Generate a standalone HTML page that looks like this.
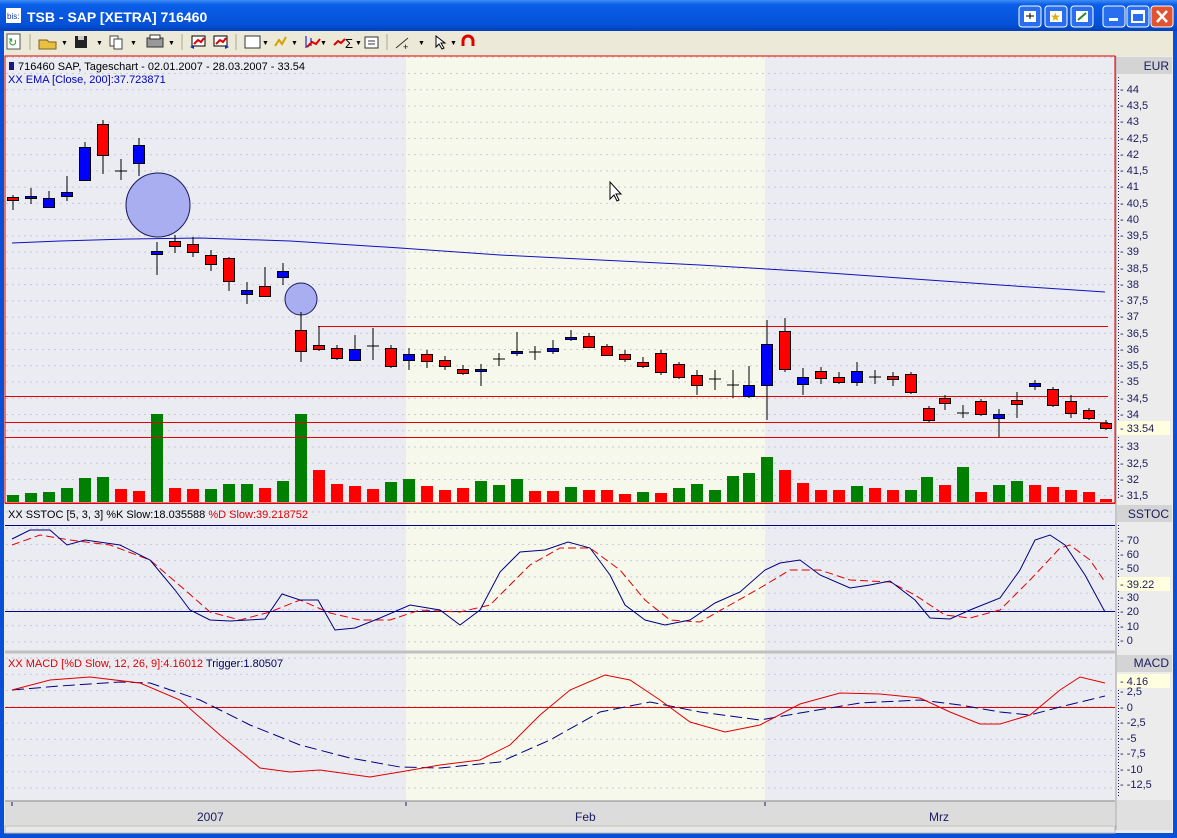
<!DOCTYPE html>
<html><head><meta charset="utf-8"><style>
body{margin:0;width:1177px;height:838px;overflow:hidden;background:#ece9d8;font-family:"Liberation Sans",sans-serif}
svg{position:absolute;left:0;top:0}
</style></head><body>
<svg width="1177" height="838" viewBox="0 0 1177 838" font-family="Liberation Sans, sans-serif">
<defs>
<linearGradient id="tb" x1="0" y1="0" x2="0" y2="1"><stop offset="0" stop-color="#3d8cf5"/><stop offset=".15" stop-color="#0a5ee8"/><stop offset=".8" stop-color="#0551d8"/><stop offset="1" stop-color="#0240b8"/></linearGradient>
<pattern id="dots" width="6" height="16.24" patternUnits="userSpaceOnUse" y="8"><rect x="0" y="0" width="2" height="1" fill="#c8c8d4"/></pattern>
</defs>
<!-- window frame -->
<rect x="0" y="0" width="1177" height="838" fill="#0850d8"/>
<rect x="0" y="0" width="1177" height="31" fill="url(#tb)"/>
<rect x="4" y="31" width="1169" height="802" fill="#ece9d8"/>
<!-- title -->
<rect x="6" y="8" width="15" height="15" fill="#fff"/><text x="7" y="19" font-size="8" fill="#0a3a9a">bis:</text>
<text x="27" y="22" font-size="14" font-weight="bold" fill="#fff">TSB - SAP [XETRA] 716460</text>
<g stroke="#fff" stroke-width="1">
<rect x="1019" y="6" width="22" height="21" rx="3" fill="#2a6ef0"/>
<rect x="1045" y="6" width="22" height="21" rx="3" fill="#2a6ef0"/>
<rect x="1071" y="6" width="22" height="21" rx="3" fill="#2a6ef0"/>
<rect x="1103" y="6" width="22" height="21" rx="3" fill="#2a6ef0"/>
<rect x="1127" y="6" width="22" height="21" rx="3" fill="#2a6ef0"/>
<rect x="1151" y="6" width="22" height="21" rx="3" fill="#e0552f"/>
</g>
<rect x="1024" y="11" width="12" height="11" fill="#fff"/><path d="M1026 16h8M1030 13v6" stroke="#000"/>
<rect x="1050" y="11" width="12" height="11" fill="#fff"/><text x="1050" y="21" font-size="12" fill="#e0b000">★</text>
<rect x="1076" y="11" width="12" height="11" fill="#fff"/><path d="M1078 20l8-7" stroke="#2a8a2a" stroke-width="2"/>
<rect x="1109" y="18" width="9" height="3" fill="#fff"/>
<rect x="1132" y="11" width="12" height="11" fill="none" stroke="#fff" stroke-width="2"/><rect x="1132" y="11" width="12" height="3" fill="#fff"/>
<path d="M1157 11l10 11M1167 11l-10 11" stroke="#fff" stroke-width="2.5"/>
<!-- toolbar icons -->
<g font-size="13">
<rect x="7" y="34" width="13" height="15" fill="#fff" stroke="#555"/><text x="8" y="46" fill="#1a9a1a" font-size="11">↻</text>
<line x1="30" y1="34" x2="30" y2="50" stroke="#aca899"/>
<path d="M39 40h8l2 2h7v7h-17z" fill="#e8c040" stroke="#806020"/><text x="61" y="45" font-size="7">▼</text>
<rect x="75" y="36" width="12" height="12" fill="#222"/><rect x="78" y="36" width="6" height="4" fill="#ccc"/><text x="96" y="45" font-size="7">▼</text>
<rect x="110" y="36" width="8" height="10" fill="#fff" stroke="#444"/><rect x="114" y="39" width="8" height="10" fill="#fff" stroke="#444"/><text x="130" y="45" font-size="7">▼</text>
<rect x="147" y="38" width="16" height="9" fill="#999" stroke="#333"/><rect x="150" y="35" width="10" height="4" fill="#fff" stroke="#333"/><text x="168" y="45" font-size="7">▼</text>
<line x1="182" y1="34" x2="182" y2="50" stroke="#aca899"/>
<rect x="192" y="36" width="13" height="10" fill="#fff" stroke="#000"/><path d="M194 44l4-4 3 2 3-4" stroke="#d00" fill="none" stroke-width="2"/><path d="M190 47l4-2v4z" fill="#0030c0"/>
<rect x="214" y="36" width="13" height="10" fill="#fff" stroke="#000"/><path d="M216 44l4-4 3 2 3-4" stroke="#d00" fill="none" stroke-width="2"/><path d="M229 47l-4-2v4z" fill="#0030c0"/>
<line x1="236" y1="34" x2="236" y2="50" stroke="#aca899"/>
<rect x="245" y="36" width="15" height="12" fill="#fff" stroke="#333"/><text x="262" y="45" font-size="7">▼</text>
<path d="M275 46l4-6 3 4 4-7" stroke="#d4a000" fill="none" stroke-width="2"/><text x="291" y="45" font-size="7">▼</text>
<path d="M306 36v12M311 38v8" stroke="#00c"/><path d="M307 47l5-5 4 2 4-5" stroke="#d00" fill="none" stroke-width="2"/><text x="320" y="45" font-size="7">▼</text>
<path d="M334 45l4-4 3 2 4-4" stroke="#d00" fill="none" stroke-width="2"/><text x="345" y="48" font-size="13">Σ</text><text x="355" y="45" font-size="7">▼</text>
<rect x="365" y="37" width="13" height="11" fill="#fff" stroke="#333"/><path d="M368 41h7M368 44h7" stroke="#333"/>
<line x1="387" y1="34" x2="387" y2="50" stroke="#aca899"/>
<path d="M396 48l12-10" stroke="#333"/><text x="403" y="50" font-size="9">+</text><text x="418" y="45" font-size="7">▼</text>
<path d="M436 36v11l3-3 3 5 2-1-3-5h4z" fill="#fff" stroke="#000"/><text x="450" y="45" font-size="7">▼</text>
<path d="M463 46v-5a5 5 0 0 1 10 0v5" stroke="#d00" stroke-width="3" fill="none"/>
</g>
<!-- chart area -->
<rect x="5" y="56" width="1110" height="745" fill="#ebebf2"/>
<rect x="406" y="56" width="359" height="745" fill="#f7f8ec"/>
<rect x="5" y="56" width="1110" height="745" fill="url(#dots)"/>
<rect x="5" y="56" width="1110" height="447" fill="none" stroke="#e00000" stroke-width="1"/>
<line x1="5" y1="503.5" x2="1115" y2="503.5" stroke="#e00000"/>
<line x1="5" y1="652" x2="1115" y2="652" stroke="#c0c0c0" stroke-width="3"/>
<!-- right axis -->
<rect x="1116" y="56" width="57" height="777" fill="#ececec"/>
<line x1="1116" y1="56" x2="1116" y2="830" stroke="#a0a0a0"/>
<rect x="1117" y="57" width="55" height="17" fill="#d4d4d4"/><text x="1169" y="70" font-size="12" text-anchor="end" fill="#1a1a60">EUR</text>
<rect x="1117" y="505" width="55" height="17" fill="#d4d4d4"/><text x="1169" y="518" font-size="12" text-anchor="end" fill="#1a1a60">SSTOC</text>
<rect x="1117" y="655" width="55" height="17" fill="#d4d4d4"/><text x="1169" y="667" font-size="12" text-anchor="end" fill="#1a1a60">MACD</text>
<rect x="1117" y="800" width="55" height="30" fill="#e0e0e0"/>
<g stroke="#1a1a60" stroke-dasharray="1,2"><line x1="1118.5" y1="77" x2="1118.5" y2="500"/><line x1="1118.5" y1="525" x2="1118.5" y2="648"/><line x1="1118.5" y1="675" x2="1118.5" y2="798"/></g>
<g font-size="11" fill="#1a1a60">
<text x="1120" y="93">- 44</text><text x="1120" y="109">- 43,5</text><text x="1120" y="125">- 43</text><text x="1120" y="142">- 42,5</text><text x="1120" y="158">- 42</text><text x="1120" y="174">- 41,5</text><text x="1120" y="190">- 41</text><text x="1120" y="207">- 40,5</text><text x="1120" y="223">- 40</text><text x="1120" y="239">- 39,5</text><text x="1120" y="255">- 39</text><text x="1120" y="272">- 38,5</text><text x="1120" y="288">- 38</text><text x="1120" y="304">- 37,5</text><text x="1120" y="320">- 37</text><text x="1120" y="337">- 36,5</text><text x="1120" y="353">- 36</text><text x="1120" y="369">- 35,5</text><text x="1120" y="385">- 35</text><text x="1120" y="402">- 34,5</text><text x="1120" y="418">- 34</text><text x="1120" y="450">- 33</text><text x="1120" y="467">- 32,5</text><text x="1120" y="483">- 32</text><text x="1120" y="499">- 31,5</text>
<rect x="1117" y="421" width="53" height="14" fill="#ffffe0"/><text x="1120" y="432">- 33.54</text>
<text x="1120" y="544">- 70</text><text x="1120" y="558">- 60</text><text x="1120" y="572">- 50</text><rect x="1117" y="577" width="53" height="14" fill="#ffffe0"/><text x="1120" y="588">- 39.22</text><text x="1120" y="601">- 30</text><text x="1120" y="615">- 20</text><text x="1120" y="630">- 10</text><text x="1120" y="644">- 0</text>
<rect x="1117" y="674" width="53" height="14" fill="#ffffe0"/><text x="1120" y="685">- 4.16</text><text x="1120" y="695">- 2,5</text><text x="1120" y="711">- 0</text><text x="1120" y="726">- -2,5</text><text x="1120" y="742">- -5</text><text x="1120" y="757">- -7,5</text><text x="1120" y="773">- -10</text><text x="1120" y="788">- -12,5</text>
</g>
<!-- date axis -->
<rect x="5" y="801" width="1110" height="24" fill="#dcdcdc"/>
<line x1="5" y1="801" x2="1115" y2="801" stroke="#888"/>
<path d="M12 802v4M406 802v4M765 802v4" stroke="#1a1a60"/>
<g font-size="12" fill="#1a1a60"><text x="197" y="821">2007</text><text x="575" y="821">Feb</text><text x="929" y="821">Mrz</text></g>
<rect x="5" y="826" width="1110" height="7" fill="#e8e8e8" stroke="#bbb"/>
<!-- headers -->
<rect x="9" y="62" width="5" height="8" fill="#1a1a80"/>
<text x="18" y="70" font-size="11" fill="#000">716460  SAP, Tageschart - 02.01.2007 - 28.03.2007 - 33.54</text>
<text x="8" y="83" font-size="11" fill="#0000c0">XX EMA [Close, 200]:37.723871</text>
<text x="8" y="518" font-size="11" fill="#000">XX SSTOC [5, 3, 3] %K Slow:18.035588 <tspan fill="#e00000">%D Slow:39.218752</tspan></text>
<text x="8" y="667" font-size="11" fill="#e00000">XX MACD [%D Slow, 12, 26, 9]:4.16012 <tspan fill="#000060">Trigger:1.80507</tspan></text>
<!-- volumes -->
<g fill="#008000">
<rect x="7" y="495" width="12" height="7"/><rect x="25" y="493" width="12" height="9"/><rect x="43" y="492" width="12" height="10"/><rect x="61" y="488" width="12" height="14"/><rect x="79" y="478" width="12" height="24"/><rect x="97" y="477" width="12" height="25"/><rect x="151" y="414" width="12" height="88"/><rect x="205" y="489" width="12" height="13"/><rect x="223" y="484" width="12" height="18"/><rect x="241" y="484" width="12" height="18"/><rect x="277" y="481" width="12" height="21"/><rect x="295" y="414" width="12" height="88"/><rect x="385" y="482" width="12" height="20"/><rect x="403" y="479" width="12" height="23"/><rect x="475" y="481" width="12" height="21"/><rect x="493" y="485" width="12" height="17"/><rect x="511" y="479" width="12" height="23"/><rect x="565" y="487" width="12" height="15"/><rect x="637" y="492" width="12" height="10"/><rect x="673" y="488" width="12" height="14"/><rect x="691" y="484" width="12" height="18"/><rect x="709" y="490" width="12" height="12"/><rect x="727" y="476" width="12" height="26"/><rect x="743" y="473" width="12" height="29"/><rect x="761" y="457" width="12" height="45"/><rect x="851" y="486" width="12" height="16"/><rect x="905" y="490" width="12" height="12"/><rect x="921" y="477" width="12" height="25"/><rect x="957" y="467" width="12" height="35"/><rect x="993" y="485" width="12" height="17"/><rect x="1011" y="481" width="12" height="21"/>
</g>
<g fill="#ff0000">
<rect x="115" y="489" width="12" height="13"/><rect x="133" y="491" width="12" height="11"/><rect x="169" y="488" width="12" height="14"/><rect x="187" y="489" width="12" height="13"/><rect x="259" y="488" width="12" height="14"/><rect x="313" y="470" width="12" height="32"/><rect x="331" y="484" width="12" height="18"/><rect x="349" y="486" width="12" height="16"/><rect x="367" y="489" width="12" height="13"/><rect x="421" y="486" width="12" height="16"/><rect x="439" y="490" width="12" height="12"/><rect x="457" y="488" width="12" height="14"/><rect x="529" y="491" width="12" height="11"/><rect x="547" y="491" width="12" height="11"/><rect x="583" y="490" width="12" height="12"/><rect x="601" y="490" width="12" height="12"/><rect x="619" y="494" width="12" height="8"/><rect x="655" y="493" width="12" height="9"/><rect x="779" y="470" width="12" height="32"/><rect x="797" y="483" width="12" height="19"/><rect x="815" y="490" width="12" height="12"/><rect x="833" y="490" width="12" height="12"/><rect x="869" y="488" width="12" height="14"/><rect x="887" y="490" width="12" height="12"/><rect x="939" y="485" width="12" height="17"/><rect x="975" y="492" width="12" height="10"/><rect x="1029" y="485" width="12" height="17"/><rect x="1047" y="487" width="12" height="15"/><rect x="1065" y="490" width="12" height="12"/><rect x="1083" y="492" width="12" height="10"/><rect x="1100" y="499" width="12" height="3"/>
</g>
<!-- red support lines -->
<g stroke="#e00000"><line x1="318" y1="326.5" x2="1108" y2="326.5"/><line x1="5" y1="396.5" x2="1108" y2="396.5"/><line x1="5" y1="422.5" x2="1108" y2="422.5"/><line x1="5" y1="437.5" x2="1108" y2="437.5"/></g>
<!-- EMA -->
<polyline fill="none" stroke="#1010c0" points="12,243 60,241 130,239 200,238 290,241 400,248 500,255 600,260 700,265 800,271 900,278 1000,285 1105,292"/>
<!-- circles -->
<circle cx="158" cy="205" r="32" fill="#a8aef0" stroke="#1a1a60"/>
<circle cx="301" cy="299" r="16" fill="#a8aef0" stroke="#1a1a60"/>
<!-- candles -->
<g stroke="#000" stroke-width="1">
<path d="M13 195v15M31 188v16M49 191v16M67 176v25M85 142v38M103 120v54M121 159v21M115 171h12M139 138v38M157 242v33M175 235v18M193 237v20M211 250v21M229 257v34M247 282v22M265 267v29M283 263v22M301 312v50M319 326v25M337 345v15M355 335v26M373 328v32M367 346h12M391 345v23M409 348v22M427 350v18M445 356v14M463 365v10M481 364v22M499 353v13M493 359h12M517 332v24M535 346v14M529 352h12M553 340v14M571 330v11M589 333v15M607 344v12M625 350v12M643 357v11M661 350v25M679 362v17M697 370v25M715 370v20M709 379h12M733 370v28M727 385h12M749 366v32M767 320v100M785 318v54M803 368v27M821 367v17M839 372v12M857 362v24M875 370v14M869 377h12M893 372v14M911 372v22M929 406v16M945 395v15M963 405v13M957 413h12M981 399v17M999 409v28M1017 392v26M1035 380v10M1053 387v20M1071 395v23M1089 408v12M1106 420v10"/>
</g>
<g stroke="#000" stroke-width="1" fill="#ff0000">
<rect x="7.5" y="197.5" width="11" height="3"/><rect x="97.5" y="124.5" width="11" height="31"/><rect x="169.5" y="241.5" width="11" height="5"/><rect x="187.5" y="244.5" width="11" height="8"/><rect x="205.5" y="255.5" width="11" height="9"/><rect x="223.5" y="258.5" width="11" height="23"/><rect x="259.5" y="286.5" width="11" height="10"/><rect x="295.5" y="330.5" width="11" height="21"/><rect x="313.5" y="345.5" width="11" height="4"/><rect x="331.5" y="348.5" width="11" height="10"/><rect x="385.5" y="348.5" width="11" height="18"/><rect x="421.5" y="354.5" width="11" height="7"/><rect x="439.5" y="360.5" width="11" height="6"/><rect x="457.5" y="369.5" width="11" height="4"/><rect x="583.5" y="336.5" width="11" height="11"/><rect x="601.5" y="346.5" width="11" height="9"/><rect x="619.5" y="354.5" width="11" height="5"/><rect x="637.5" y="362.5" width="11" height="4"/><rect x="655.5" y="353.5" width="11" height="19"/><rect x="673.5" y="364.5" width="11" height="13"/><rect x="691.5" y="375.5" width="11" height="10"/><rect x="779.5" y="331.5" width="11" height="38"/><rect x="815.5" y="371.5" width="11" height="7"/><rect x="833.5" y="377.5" width="11" height="5"/><rect x="887.5" y="376.5" width="11" height="3"/><rect x="905.5" y="374.5" width="11" height="18"/><rect x="923.5" y="408.5" width="11" height="12"/><rect x="939.5" y="398.5" width="11" height="5"/><rect x="975.5" y="401.5" width="11" height="13"/><rect x="1011.5" y="400.5" width="11" height="4"/><rect x="1047.5" y="389.5" width="11" height="16"/><rect x="1065.5" y="401.5" width="11" height="12"/><rect x="1083.5" y="410.5" width="11" height="8"/><rect x="1100.5" y="423.5" width="11" height="5"/>
</g>
<g stroke="#000" stroke-width="1" fill="#0000ff">
<rect x="25.5" y="196.5" width="11" height="2"/><rect x="43.5" y="198.5" width="11" height="9"/><rect x="61.5" y="192.5" width="11" height="4"/><rect x="79.5" y="147.5" width="11" height="33"/><rect x="133.5" y="145.5" width="11" height="18"/><rect x="151.5" y="251.5" width="11" height="3"/><rect x="241.5" y="290.5" width="11" height="4"/><rect x="277.5" y="271.5" width="11" height="6"/><rect x="349.5" y="349.5" width="11" height="11"/><rect x="403.5" y="354.5" width="11" height="6"/><rect x="475.5" y="369.5" width="11" height="2"/><rect x="511.5" y="351.5" width="11" height="2"/><rect x="547.5" y="348.5" width="11" height="3"/><rect x="565.5" y="337.5" width="11" height="2"/><rect x="743.5" y="385.5" width="11" height="11"/><rect x="761.5" y="344.5" width="11" height="41"/><rect x="797.5" y="377.5" width="11" height="7"/><rect x="851.5" y="371.5" width="11" height="11"/><rect x="993.5" y="414.5" width="11" height="4"/><rect x="1029.5" y="383.5" width="11" height="3"/>
</g>
<!-- cursor -->
<path d="M610 182v17l4-4 3 6 2-1-3-6h5z" fill="#fff" stroke="#000"/>
<!-- SSTOC -->
<line x1="5" y1="525.5" x2="1115" y2="525.5" stroke="#000080"/>
<line x1="5" y1="611.5" x2="1115" y2="611.5" stroke="#000080"/>
<polyline fill="none" stroke="#e00000" stroke-dasharray="8,4" points="12,545 40,535 70,540 110,545 150,560 185,590 210,612 240,620 270,612 300,600 330,613 360,620 390,620 420,610 460,612 490,605 510,585 530,565 560,548 590,548 620,570 645,600 670,620 700,622 730,605 760,588 790,570 820,570 850,580 890,582 915,595 945,615 970,618 1000,610 1030,580 1060,548 1070,545 1090,560 1105,582"/>
<polyline fill="none" stroke="#000080" points="12,539 30,530 50,530 67,545 85,540 120,545 150,560 175,590 190,610 210,620 230,621 265,619 282,594 300,600 318,600 335,630 355,628 380,618 410,605 440,610 460,625 480,610 500,572 520,552 545,550 568,542 590,548 610,575 625,605 645,620 665,625 690,620 715,603 740,592 765,570 780,563 800,560 820,575 850,588 870,585 890,581 915,600 930,618 950,619 970,610 1000,598 1020,570 1035,540 1050,535 1065,545 1085,575 1105,612"/>
<!-- MACD -->
<line x1="5" y1="707.5" x2="1115" y2="707.5" stroke="#e00000"/>
<polyline fill="none" stroke="#000080" stroke-dasharray="12,5" points="12,690 60,686 120,682 150,683 200,700 250,725 300,745 350,758 400,767 440,768 500,762 550,740 600,712 650,702 700,712 760,720 800,713 860,703 920,700 960,705 1000,712 1030,715 1060,707 1105,696"/>
<polyline fill="none" stroke="#e00000" points="12,690 50,680 90,677 140,683 180,700 220,735 260,768 290,772 320,770 370,777 400,772 440,765 480,760 510,745 540,715 570,690 605,675 630,680 660,700 690,722 725,732 760,725 800,704 840,693 880,694 920,698 950,712 980,724 1000,724 1030,715 1060,690 1080,677 1105,683"/>
</svg>
</body></html>
